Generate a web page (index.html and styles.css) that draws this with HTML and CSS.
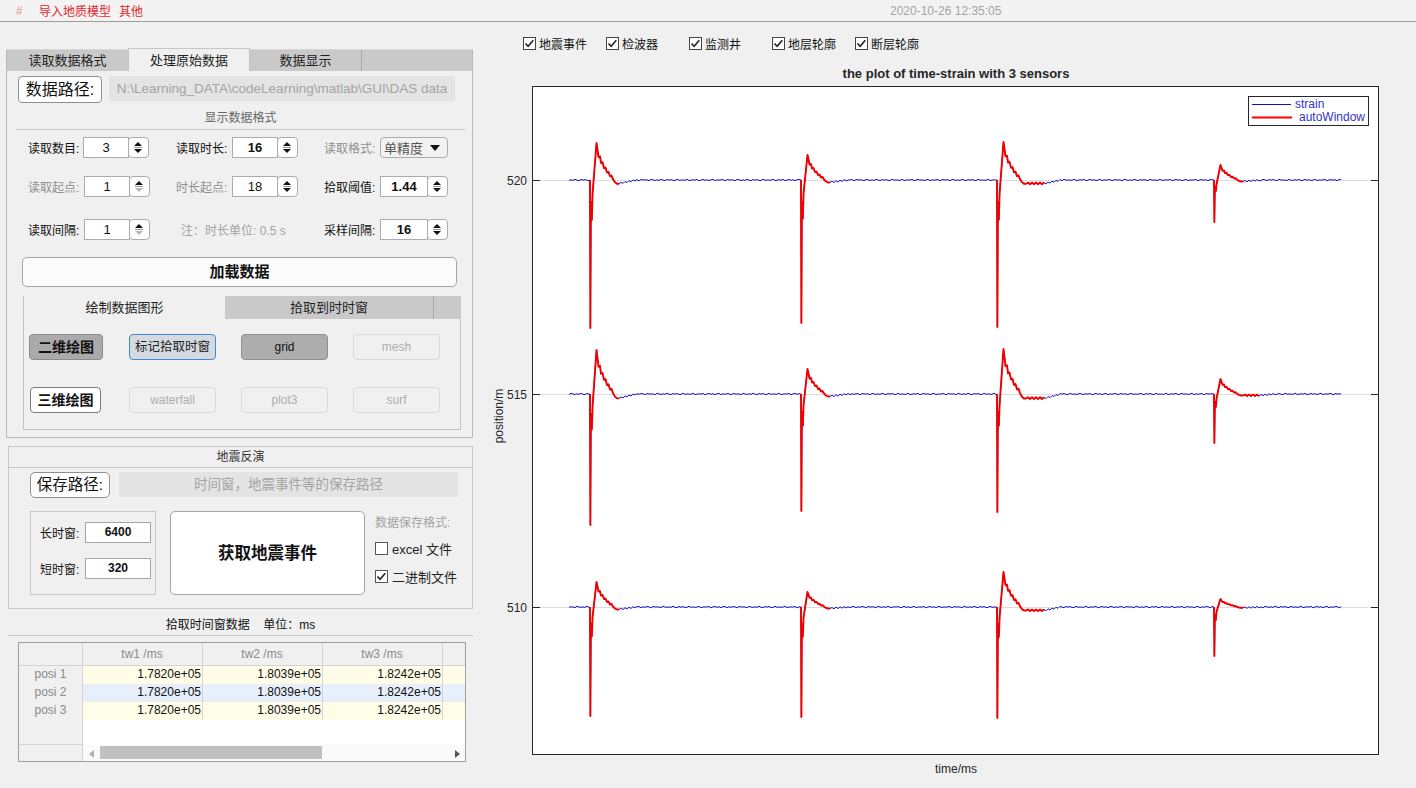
FILE: index.html
```html
<!DOCTYPE html>
<html lang="zh">
<head>
<meta charset="utf-8">
<title>DAS</title>
<link rel="stylesheet" href="styles.css">
</head>
<body>
<div class="topbar">
  <div class="menus"><span class="hash">#</span><span class="menu">导入地质模型</span><span class="menu">其他</span></div>
  <span class="date">2020-10-26 12:35:05</span>
</div>
<div class="main">
  <div class="left">
    <div class="tabs">
      <div class="tabbar">
        <div class="tab t1">读取数据格式</div>
        <div class="tab t2 active">处理原始数据</div>
        <div class="tab t3">数据显示</div>
        <div class="tab blank"></div>
      </div>
      <div class="tabbody">
        <div class="pathrow">
          <div class="pbtn">数据路径:</div>
          <div class="pfield">N:\Learning_DATA\codeLearning\matlab\GUI\DAS data</div>
        </div>
        <div class="sectitle">显示数据格式</div>
        <div class="frow r1">
          <div class="cell"><span class="lab lab1">读取数目:</span>
            <div class="spin"><span class="val">3</span><span class="arr"><svg width="19" height="19" viewBox="0 0 19 19"><path d="M5 8h8l-4-4z" fill="#111"/><path d="M5 9.5h8" stroke="#999" stroke-width="1"/><path d="M5 11h8l-4 4z" fill="#111"/></svg></span></div>
          </div>
          <div class="cell"><span class="lab">读取时长:</span>
            <div class="spin"><span class="val b">16</span><span class="arr"><svg width="19" height="19" viewBox="0 0 19 19"><path d="M5 8h8l-4-4z" fill="#111"/><path d="M5 9.5h8" stroke="#999" stroke-width="1"/><path d="M5 11h8l-4 4z" fill="#111"/></svg></span></div>
          </div>
          <div class="cell"><span class="lab dis">读取格式:</span>
            <div class="dd"><span>单精度</span><svg width="10" height="8" viewBox="0 0 10 8"><path d="M0 1h10L5 7z" fill="#111"/></svg></div>
          </div>
        </div>
        <div class="frow r2">
          <div class="cell"><span class="lab dis">读取起点:</span>
            <div class="spin"><span class="val">1</span><span class="arr"><svg width="19" height="19" viewBox="0 0 19 19"><path d="M5 8h8l-4-4z" fill="#111"/><path d="M5 9.5h8" stroke="#999" stroke-width="1"/><path d="M5 11h8l-4 4z" fill="#b5b5b5"/></svg></span></div>
          </div>
          <div class="cell"><span class="lab dis">时长起点:</span>
            <div class="spin"><span class="val">18</span><span class="arr"><svg width="19" height="19" viewBox="0 0 19 19"><path d="M5 8h8l-4-4z" fill="#111"/><path d="M5 9.5h8" stroke="#999" stroke-width="1"/><path d="M5 11h8l-4 4z" fill="#111"/></svg></span></div>
          </div>
          <div class="cell"><span class="lab">拾取阈值:</span>
            <div class="spin wide"><span class="val b">1.44</span><span class="arr"><svg width="19" height="19" viewBox="0 0 19 19"><path d="M5 8h8l-4-4z" fill="#111"/><path d="M5 9.5h8" stroke="#999" stroke-width="1"/><path d="M5 11h8l-4 4z" fill="#111"/></svg></span></div>
          </div>
        </div>
        <div class="frow r3">
          <div class="cell"><span class="lab">读取间隔:</span>
            <div class="spin"><span class="val">1</span><span class="arr"><svg width="19" height="19" viewBox="0 0 19 19"><path d="M5 8h8l-4-4z" fill="#111"/><path d="M5 9.5h8" stroke="#999" stroke-width="1"/><path d="M5 11h8l-4 4z" fill="#b5b5b5"/></svg></span></div>
          </div>
          <div class="cell"><span class="note">注：时长单位: 0.5 s</span></div>
          <div class="cell"><span class="lab">采样间隔:</span>
            <div class="spin wide"><span class="val b">16</span><span class="arr"><svg width="19" height="19" viewBox="0 0 19 19"><path d="M5 8h8l-4-4z" fill="#111"/><path d="M5 9.5h8" stroke="#999" stroke-width="1"/><path d="M5 11h8l-4 4z" fill="#111"/></svg></span></div>
          </div>
        </div>
        <div class="loadbtn">加载数据</div>
        <div class="subtabs">
          <div class="stbar">
            <div class="stab active">绘制数据图形</div>
            <div class="stab s2">拾取到时时窗</div>
            <div class="stab sblank"></div>
          </div>
          <div class="stbody">
            <div class="brow br1">
              <div class="btn dark bold w74 m5">二维绘图</div>
              <div class="btn focus w87 m26">标记拾取时窗</div>
              <div class="btn mid w87 m25">grid</div>
              <div class="btn off w87 m25">mesh</div>
            </div>
            <div class="brow br2">
              <div class="btn white bold w71 m6">三维绘图</div>
              <div class="btn off w87 m28">waterfall</div>
              <div class="btn off w87 m25">plot3</div>
              <div class="btn off w87 m25">surf</div>
            </div>
          </div>
        </div>
      </div>
    </div>

    <div class="quake">
      <div class="ptitle">地震反演</div>
      <div class="qpath">
        <div class="pbtn sbtn">保存路径:</div>
        <div class="pfield sfield">时间窗，地震事件等的保存路径</div>
      </div>
      <div class="qrow">
        <div class="winbox">
          <div class="wrow"><span class="wlab">长时窗:</span><span class="winp">6400</span></div>
          <div class="wrow w2"><span class="wlab">短时窗:</span><span class="winp">320</span></div>
        </div>
        <div class="getbtn">获取地震事件</div>
        <div class="fmt">
          <div class="fmttitle">数据保存格式:</div>
          <div class="cbrow c1"><span class="cb"></span><span>excel 文件</span></div>
          <div class="cbrow c2"><span class="cb"><svg width="13" height="13" viewBox="0 0 13 13"><path d="M2.5 6.5l2.6 2.8 5.2-6" fill="none" stroke="#222" stroke-width="1.6"/></svg></span><span>二进制文件</span></div>
        </div>
      </div>
    </div>

    <div class="ttitle">拾取时间窗数据&nbsp;&nbsp;&nbsp;&nbsp;单位：ms</div>
    <div class="grid">
      <div class="grow ghead">
        <div class="gc rh"></div><div class="gc col hd">tw1 /ms</div><div class="gc col hd">tw2 /ms</div><div class="gc col hd">tw3 /ms</div><div class="gc rest hd"></div>
      </div>
      <div class="grow d y">
        <div class="gc rh">posi 1</div><div class="gc col">1.7820e+05</div><div class="gc col">1.8039e+05</div><div class="gc col">1.8242e+05</div><div class="gc rest"></div>
      </div>
      <div class="grow d bl">
        <div class="gc rh">posi 2</div><div class="gc col">1.7820e+05</div><div class="gc col">1.8039e+05</div><div class="gc col">1.8242e+05</div><div class="gc rest"></div>
      </div>
      <div class="grow d y">
        <div class="gc rh">posi 3</div><div class="gc col">1.7820e+05</div><div class="gc col">1.8039e+05</div><div class="gc col">1.8242e+05</div><div class="gc rest"></div>
      </div>
      <div class="grow empty"><div class="gc rh"></div><div class="gfill"></div></div>
      <div class="grow sbar">
        <div class="gc rh"></div>
        <div class="track">
          <svg class="la" width="6" height="8" viewBox="0 0 6 8"><path d="M5 0v8L0 4z" fill="#b0b0b0"/></svg>
          <div class="thumb"></div>
          <svg class="ra" width="6" height="8" viewBox="0 0 6 8"><path d="M1 0v8l5-4z" fill="#555"/></svg>
        </div>
      </div>
    </div>
  </div>

  <div class="right">
    <div class="checks">
      <div class="chk"><span class="cb"><svg width="13" height="13" viewBox="0 0 13 13"><path d="M2.5 6.5l2.6 2.8 5.2-6" fill="none" stroke="#222" stroke-width="1.6"/></svg></span>地震事件</div>
      <div class="chk"><span class="cb"><svg width="13" height="13" viewBox="0 0 13 13"><path d="M2.5 6.5l2.6 2.8 5.2-6" fill="none" stroke="#222" stroke-width="1.6"/></svg></span>检波器</div>
      <div class="chk"><span class="cb"><svg width="13" height="13" viewBox="0 0 13 13"><path d="M2.5 6.5l2.6 2.8 5.2-6" fill="none" stroke="#222" stroke-width="1.6"/></svg></span>监测井</div>
      <div class="chk"><span class="cb"><svg width="13" height="13" viewBox="0 0 13 13"><path d="M2.5 6.5l2.6 2.8 5.2-6" fill="none" stroke="#222" stroke-width="1.6"/></svg></span>地层轮廓</div>
      <div class="chk"><span class="cb"><svg width="13" height="13" viewBox="0 0 13 13"><path d="M2.5 6.5l2.6 2.8 5.2-6" fill="none" stroke="#222" stroke-width="1.6"/></svg></span>断层轮廓</div>
    </div>
    <svg class="plot" width="936" height="723" viewBox="0 0 936 723">
      <defs><clipPath id="ax"><rect x="533" y="87" width="845" height="667"/></clipPath></defs>
      <g transform="translate(-480,-65)">
        <text class="ptitle-t" x="956" y="78">the plot of time-strain with 3 sensors</text>
        <rect x="532.5" y="86.5" width="846" height="668" fill="#fff" stroke="#262626"/>
        <g stroke="#dcdcdc" stroke-width="1">
          <path d="M533 180.5H1378M533 394.5H1378M533 607.5H1378"/>
        </g>
        <g stroke="#262626" stroke-width="1">
          <path d="M533 180.5h7M533 394.5h7M533 607.5h7M1371 180.5h7M1371 394.5h7M1371 607.5h7"/>
        </g>
        <g class="tick">
          <text x="527" y="184.5">520</text>
          <text x="527" y="398.5">515</text>
          <text x="527" y="611.5">510</text>
        </g>
        <text class="axlab" transform="translate(503,416) rotate(-90)">position/m</text>
        <text class="axlab" x="956" y="773">time/ms</text>
        <g id="signals" clip-path="url(#ax)"></g>
        <rect x="1248.5" y="96.5" width="120" height="29" fill="#fff" stroke="#262626"/>
        <path d="M1252 104.5h39" stroke="#1010c0" stroke-width="1"/>
        <path d="M1252 117.5h40" stroke="#f00" stroke-width="2"/>
        <text class="leg" x="1295" y="108">strain</text>
        <text class="leg" x="1299" y="121">autoWindow</text>
      </g>
    </svg>
  </div>
</div>
<script src="script.js"></script>
</body>
</html>
```

FILE: styles.css
```css
* { box-sizing: border-box; }
html, body { margin: 0; padding: 0; }
body {
  width: 1416px; height: 788px; overflow: hidden;
  background: #f0f0f0;
  font-family: "Liberation Sans", "Noto Sans CJK SC", sans-serif;
  font-size: 12px; color: #1a1a1a;
}

/* top bar */
.topbar {
  height: 22px; background: #f3f3f3; border-bottom: 1px solid #9c9c9c;
  display: flex; align-items: center;
}
.menus { width: 890px; display: flex; align-items: center; }
.hash { margin-left: 16px; width: 23px; color: #f08c8c; }
.menu { color: #e3262b; margin-right: 8px; }
.date { color: #a3a3a3; }

.main { display: flex; height: 766px; }
.left { width: 480px; flex: none; }
.right { flex: 1; display: flex; flex-direction: column; }

/* main tab group */
.tabs { margin: 27px 0 0 6px; width: 467px; }
.tabbar { display: flex; height: 22px; background: #c9c9c9; border-top: 1px solid #d6d6d6; }
.tab { height: 21px; line-height: 21px; text-align: center; font-size: 13px; color: #222; }
.tab.t1 { width: 122px; border-left: 1px solid #b8b8b8; }
.tab.t2 { width: 122px; }
.tab.t3 { width: 112px; border-right: 1px solid #a9a9a9; }
.tab.blank { flex: 1; border-right: 1px solid #b8b8b8; }
.tab.active {
  background: #f0f0f0; height: 23px; margin-top: -2px; line-height: 24px;
  border: 1px solid #c6c6c6; border-bottom: none;
}
.tabbody {
  height: 367px; border: 1px solid #b9b9b9; border-top: none;
  display: flex; flex-direction: column;
}

.pathrow { display: flex; margin: 5px 0 0 11px; align-items: flex-start; }
.pbtn {
  width: 84px; height: 27px; background: #fff; border: 1px solid #8f8f8f; border-radius: 4px;
  font-size: 16px; line-height: 25px; text-align: center; color: #111;
}
.pfield {
  margin-left: 7px; width: 346px; height: 25px; background: #e4e4e4; color: #a3a3a3;
  font-size: 13.5px; line-height: 25px; text-align: center;
}

.sectitle {
  margin: 6px 7px 0 9px; height: 21px; line-height: 19px; text-align: center;
  color: #666; border-bottom: 1px solid #c9c9c9;
}

.frow { display: flex; margin-left: 21px; height: 21px; align-items: center; }
.frow.r1 { margin-top: 7px; }
.frow.r2 { margin-top: 18px; }
.frow.r3 { margin-top: 22px; }
.cell { width: 150px; display: flex; align-items: center; height: 21px; }
.lab { width: 56px; flex: none; color: #111; }
.lab.lab1 { width: 55px; }
.lab.dis { color: #8f8f8f; }
.note { margin-left: 5px; color: #a3a3a3; }

.spin { display: flex; width: 66px; height: 21px; }
.spin.wide { width: 68px; }
.spin .val {
  flex: 1; background: #fff; border: 1px solid #acacac; text-align: center;
  line-height: 19px; font-size: 13px; color: #111;
}
.spin .val.b { font-weight: bold; }
.spin .arr {
  width: 21px; flex: none; background: #fff; border: 1px solid #acacac; border-radius: 4px;
  margin-left: -1px; display: flex; align-items: center; justify-content: center;
}
.dd {
  width: 68px; height: 21px; border: 1px solid #acacac; border-radius: 4px; background: #f2f2f2;
  display: flex; align-items: center; justify-content: space-between; padding: 0 7px 0 3px;
  color: #555; font-size: 13px;
}

.loadbtn {
  margin: 17px 0 0 15px; width: 435px; height: 30px; border: 1px solid #a6a6a6; border-radius: 5px;
  background: #fbfbfb; text-align: center; line-height: 28px; font-size: 15px; font-weight: bold; color: #111;
}

/* sub tabs */
.subtabs { margin: 9px 0 0 16px; width: 438px; }
.stbar { display: flex; height: 23px; background: #c9c9c9; }
.stab { height: 23px; line-height: 23px; text-align: center; font-size: 13px; color: #222; }
.stab.active { width: 202px; background: #f0f0f0; border-left: 1px solid #c6c6c6; }
.stab.s2 { width: 209px; border-right: 1px solid #a9a9a9; }
.stab.sblank { flex: 1; }
.stbody {
  height: 111px; border: 1px solid #c3c3c3; border-top: none;
  display: flex; flex-direction: column;
}
.brow { display: flex; height: 26px; flex: none; }
.brow.br1 { margin-top: 15px; }
.brow.br2 { margin-top: 27px; }
.btn {
  height: 26px; border-radius: 4px; text-align: center; line-height: 24px; font-size: 12px;
  border: 1px solid #999;
}
.w74 { width: 74px; } .w71 { width: 71px; } .w87 { width: 87px; }
.m5 { margin-left: 5px; } .m6 { margin-left: 6px; } .m25 { margin-left: 25px; }
.m26 { margin-left: 26px; } .m28 { margin-left: 28px; }
.btn.bold { font-size: 14px; font-weight: bold; color: #111; }
.btn.dark { background: #aaaaaa; border-color: #8c8c8c; }
.btn.white { background: #fff; border-color: #7d7d7d; }
.btn.focus { background: #d4dae0; border-color: #3d8ad6; color: #222; font-size: 12.5px; }
.btn.mid { background: #adadad; border-color: #8f8f8f; color: #111; }
.btn.off { background: #f0f0f0; border-color: #d9d9d9; color: #adadad; }

/* quake panel */
.quake { margin: 8px 0 0 8px; width: 465px; height: 163px; border: 1px solid #c8c8c8; }
.ptitle { height: 21px; line-height: 20px; text-align: center; color: #333; border-bottom: 1px solid #c8c8c8; }
.qpath { display: flex; margin: 4px 0 0 21px; align-items: flex-start; }
.pbtn.sbtn { width: 80px; height: 26px; line-height: 24px; font-size: 15.5px; border-radius: 5px; }
.pfield.sfield { margin-left: 9px; width: 339px; height: 25px; font-size: 13.5px; }
.qrow { display: flex; margin: 13px 0 0 21px; }
.winbox { width: 126px; height: 84px; border: 1px solid #c8c8c8; padding: 10px 0 0 9px; }
.wrow { display: flex; align-items: center; height: 21px; }
.wrow.w2 { margin-top: 15px; }
.wlab { width: 45px; color: #111; }
.winp {
  width: 66px; height: 21px; background: #fff; border: 1px solid #a5a5a5;
  text-align: center; line-height: 19px; font-weight: bold; color: #111;
}
.getbtn {
  margin-left: 14px; width: 195px; height: 84px; background: #fff; border: 1px solid #a5a5a5;
  border-radius: 5px; font-size: 16.5px; font-weight: bold; text-align: center; line-height: 82px; color: #111;
}
.fmt { margin-left: 10px; padding-top: 3px; }
.fmttitle { color: #a3a3a3; height: 18px; line-height: 18px; }
.cbrow { display: flex; align-items: center; height: 16px; font-size: 13px; color: #222; }
.cbrow.c1 { margin-top: 8px; }
.cbrow.c2 { margin-top: 12px; }
.cb {
  width: 13px; height: 13px; background: #fff; border: 1px solid #555; display: inline-flex;
  margin-right: 4px; flex: none; position: relative;
}
.cb svg { position: absolute; left: -1px; top: -1px; }

/* table */
.ttitle {
  margin-left: 8px; width: 465px; height: 27px; border-bottom: 1px solid #c8c8c8;
  text-align: center; padding-top: 8px; line-height: 16px; color: #111;
}
.grid {
  margin: 6px 0 0 18px; width: 448px; height: 120px; border: 1px solid #9e9e9e;
  display: flex; flex-direction: column; background: #fff;
}
.grow { display: flex; }
.ghead { height: 23px; border-bottom: 1px solid #d4d4d4; background: #f0f0f0; }
.grow.d { height: 18px; }
.grow.y { background: #fffde8; }
.grow.bl { background: #e6effa; }
.gc { line-height: 17px; flex: none; }
.ghead .gc { line-height: 22px; }
.gc.rh { width: 64px; background: #f0f0f0; color: #8a8a8a; text-align: center; border-right: 1px solid #d4d4d4; }
.gc.col { width: 120px; text-align: right; border-right: 1px solid #d4d4d4; color: #111; padding-right: 1px; font-size: 12px; }
.gc.hd { text-align: center; color: #8a8a8a; }
.gc.rest { flex: 1; }
.grow.empty { height: 25px; }
.grow.empty .rh { border-bottom: 1px solid #d4d4d4; }
.gfill { flex: 1; background: #fff; }
.grow.sbar { flex: 1; }
.track { flex: 1; position: relative; background: #fafafa; }
.thumb { position: absolute; left: 17px; top: 1px; width: 222px; height: 13px; background: #c1c1c1; }
.la { position: absolute; left: 6px; top: 5px; }
.ra { position: absolute; right: 5px; top: 5px; }

/* right */
.checks { height: 43px; display: flex; align-items: center; padding-left: 43px; }
.chk { width: 83px; display: flex; align-items: center; color: #111; }
.chk .cb { margin-right: 3px; border-color: #444; }
.plot { display: block; font-family: "Liberation Sans", sans-serif; }
.ptitle-t { font-size: 13px; font-weight: bold; fill: #262626; text-anchor: middle; }
.tick text { font-size: 12px; fill: #262626; text-anchor: end; }
.axlab { font-size: 12px; fill: #262626; text-anchor: middle; }
.leg { font-size: 12px; fill: #3333cc; }
```

FILE: script.js
```js
(function () {
  var NS = 'http://www.w3.org/2000/svg';
  var g = document.getElementById('signals');
  var traces = [
    { yb: 180, ev: [[590, 148, -37, 30], [801, 143, -25, 30], [997, 147, -38, 48], [1214, 42, -15, 30]] },
    { yb: 394, ev: [[590, 131, -44, 30], [801, 117, -25, 30], [997, 118, -45, 48], [1214, 49, -15, 45]] },
    { yb: 607, ev: [[590, 109, -25, 30], [801, 110, -15, 30], [997, 111, -35, 48], [1214, 49, -8, 30]] }
  ];
  function evPts(D, P, L) {
    var m1 = Math.min(0.15 * D, 22), m2 = Math.min(0.27 * D, 40);
    var k = [[0, 0], [0.4, D], [0.9, m1], [1.8, m2], [2.6, m1 * 0.6], [6.5, P], [7.5, 0.82 * P],
      [8.5, 0.62 * P], [10, 0.64 * P], [11, 0.46 * P], [12.5, 0.48 * P], [14, 0.32 * P],
      [15.5, 0.34 * P], [17, 0.2 * P], [18.5, 0.22 * P], [20, 0.1 * P], [21.5, 0.12 * P],
      [23, 0.02 * P], [25, -0.06 * P], [27, -0.1 * P], [29, -0.1 * P]];
    for (var dx = 31; dx <= L + 16; dx += 2) {
      var f = dx <= L ? 1 : Math.max(0, 1 - (dx - L) / 16);
      k.push([dx, -0.09 * P * f + ((dx % 4 === 1) ? 0.8 : -0.8)]);
    }
    return k;
  }
  function toD(pts) {
    return pts.map(function (p, i) { return (i ? 'L' : 'M') + p[0].toFixed(1) + ' ' + p[1].toFixed(1); }).join('');
  }
  function add(d, color, w) {
    var p = document.createElementNS(NS, 'path');
    p.setAttribute('d', d);
    p.setAttribute('fill', 'none');
    p.setAttribute('stroke', color);
    p.setAttribute('stroke-width', w);
    p.setAttribute('stroke-linejoin', 'round');
    g.appendChild(p);
  }
  traces.forEach(function (t, ti) {
    var pts = [], reds = [];
    var x = 569, ei = 0;
    function noise(x) { return 0.6 * Math.sin(x * 1.9 + ti) + 0.35 * Math.sin(x * 0.73 + 2 * ti); }
    while (x <= 1342) {
      var e = t.ev[ei];
      if (e && x >= e[0]) {
        var ep = evPts(e[1], e[2], e[3]);
        var red = [];
        ep.forEach(function (p) {
          var px = e[0] + p[0], py = t.yb + p[1];
          pts.push([px, py]);
          if (p[0] <= e[3]) red.push([px, py]);
        });
        reds.push(red);
        x = e[0] + ep[ep.length - 1][0] + 2;
        ei++;
        continue;
      }
      pts.push([x, t.yb + noise(x)]);
      x += 2;
    }
    add(toD(pts), '#1414c8', 1);
    reds.forEach(function (r) { add(toD(r), '#f00000', 1.9); });
  });
})();
```
